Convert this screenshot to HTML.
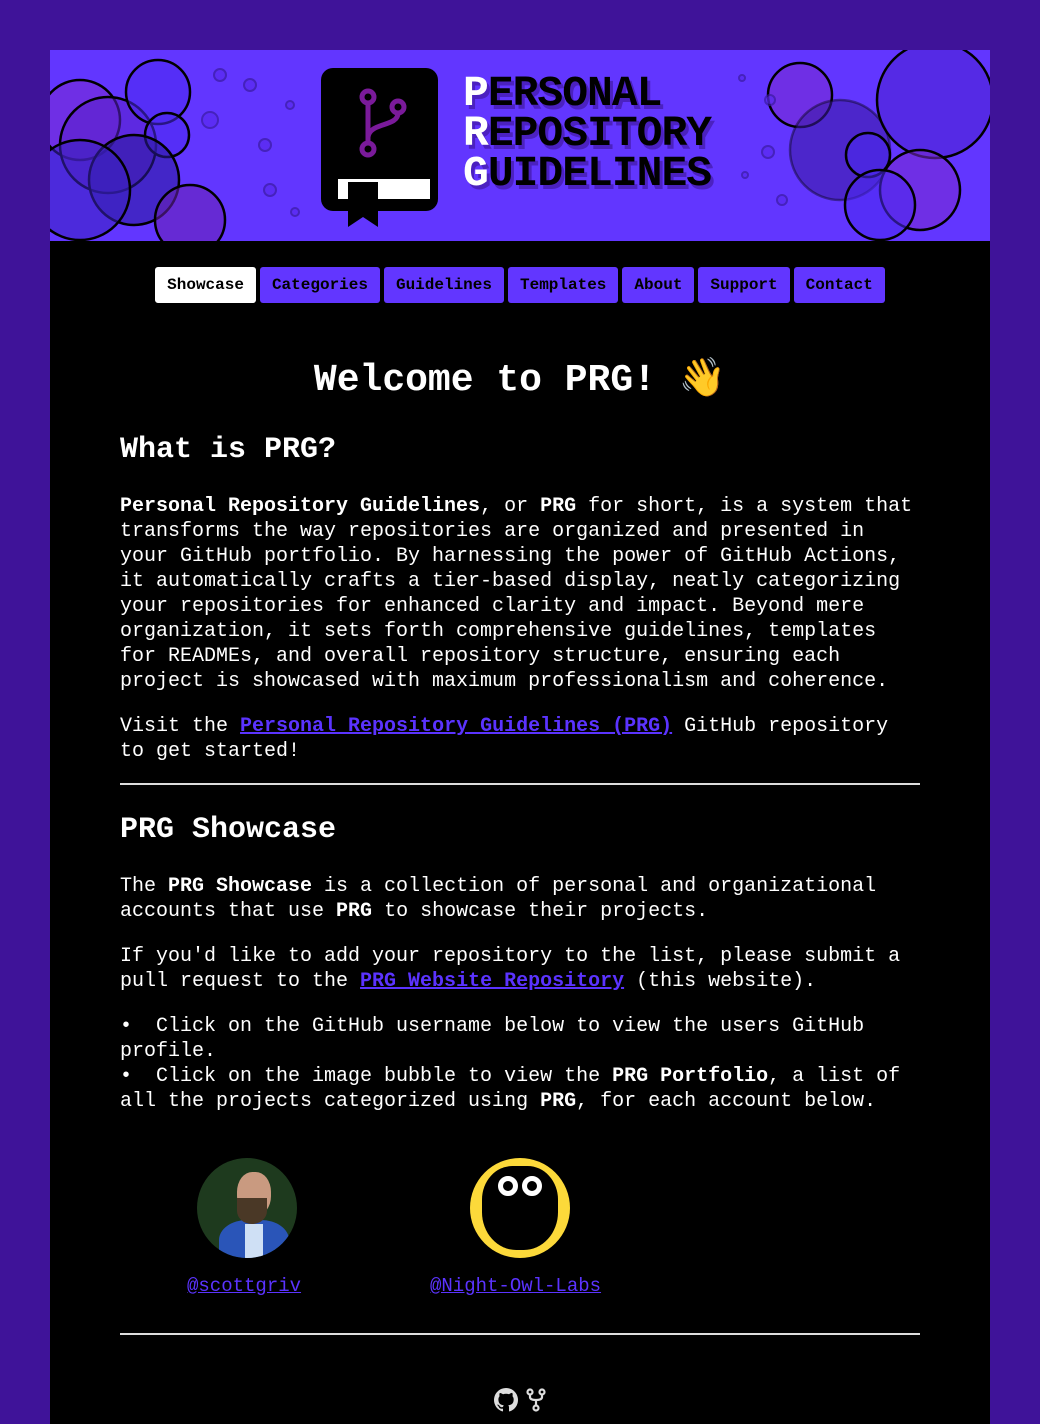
<!DOCTYPE html>
<html><head><meta charset="utf-8">
<style>
*{box-sizing:border-box}
html,body{margin:0;padding:0;width:1040px;height:1424px;overflow:hidden}
body{background:#3f1399;font-family:"Liberation Mono","DejaVu Sans Mono",monospace;color:#fff;position:relative}
.wrap{position:absolute;left:50px;top:50px;width:940px;height:1374px;background:#000;overflow:hidden}
.banner{position:absolute;left:0;top:0;width:940px;height:191px;background:#6236ff;overflow:hidden}
nav{position:absolute;top:217px;left:0;width:940px;text-align:center;font-size:0}
nav a{display:inline-block;height:36px;line-height:36px;padding:0 12px;margin:0 2px;background:#6236ff;color:#000;font-weight:bold;font-size:16px;border-radius:3px;text-decoration:none}
nav a.on{background:#fff}
.content{position:absolute;left:70px;top:300px;width:800px;font-size:20px;line-height:25px}
h1{margin:0;text-align:center;font-size:38px;line-height:56px;position:absolute;top:0;width:800px}
h2{margin:0;font-size:30px;line-height:40px;position:absolute}
p{margin:0;position:absolute;width:800px}
b{font-weight:bold}
a.l{color:#5b33ff;text-decoration:underline}
hr{position:absolute;left:0;width:800px;border:0;border-top:2px solid #ddd;margin:0}
</style></head><body>
<div class="wrap">
<div class="banner">
<svg width="940" height="191" viewBox="0 0 940 191">
<g stroke="#000" stroke-width="2.5" fill-opacity="0.55">
<circle cx="30" cy="70" r="40" fill="#7a2ad0"/>
<circle cx="58" cy="95" r="48" fill="#5a1fc8"/>
<circle cx="108" cy="42" r="32" fill="#4a28f0"/>
<circle cx="117" cy="85" r="22" fill="#4a28f0"/>
<circle cx="84" cy="130" r="45" fill="#2a1a9a"/>
<circle cx="30" cy="140" r="50" fill="#3a20c0"/>
<circle cx="140" cy="170" r="35" fill="#6a20b0"/>
<circle cx="750" cy="45" r="32" fill="#7a2ad0"/>
<circle cx="790" cy="100" r="50" fill="#3a1aa0" stroke-opacity="0.4"/>
<circle cx="885" cy="50" r="58" fill="#4a20d0"/>
<circle cx="870" cy="140" r="40" fill="#7a2ad0"/>
<circle cx="818" cy="105" r="22" fill="#4a28f0"/>
<circle cx="830" cy="155" r="35" fill="#4a28f0"/>
</g>
<g stroke="#3a1aa0" stroke-width="2" fill="#5a2af0" opacity="0.7">
<circle cx="170" cy="25" r="6"/><circle cx="160" cy="70" r="8"/><circle cx="200" cy="35" r="6"/><circle cx="215" cy="95" r="6"/><circle cx="240" cy="55" r="4"/><circle cx="220" cy="140" r="6"/><circle cx="245" cy="162" r="4"/><circle cx="720" cy="50" r="5"/><circle cx="718" cy="102" r="6"/><circle cx="732" cy="150" r="5"/><circle cx="692" cy="28" r="3"/><circle cx="695" cy="125" r="3"/>
</g>
</svg>
<svg style="position:absolute;left:270px;top:17px" width="120" height="160" viewBox="0 0 120 160">
<rect x="1" y="1" width="117" height="143" rx="12" fill="#000"/>
<rect x="18" y="112" width="92" height="20" fill="#fff"/>
<rect x="28" y="115" width="30" height="30" fill="#000"/>
<path d="M28 140 L28 160 L43 150 L58 160 L58 140Z" fill="#000"/>
<g stroke="#7a1a9a" stroke-width="5" fill="none">
<circle cx="48" cy="30" r="6"/><circle cx="78" cy="40" r="6"/><circle cx="48" cy="82" r="6"/>
<path d="M48 36 V76 M78 46 C78 60 50 55 48 70"/>
</g>
</svg>
<div style="position:absolute;left:413px;top:24px;font-weight:bold;font-size:43px;line-height:40px;color:#000;text-shadow:3px 4px 0 rgba(60,20,150,.6);letter-spacing:-1px">
<div><span style="color:#fff">P</span>ERSONAL</div><div><span style="color:#fff">R</span>EPOSITORY</div><div><span style="color:#fff">G</span>UIDELINES</div></div>
</div>
<nav><a class="on">Showcase</a><a>Categories</a><a>Guidelines</a><a>Templates</a><a>About</a><a>Support</a><a>Contact</a></nav>
<div class="content">
<h1>Welcome to PRG! <span style="font-family:'Noto Color Emoji',sans-serif">👋</span></h1>
<h2 style="top:80px">What is PRG?</h2>
<p style="top:144px"><b>Personal Repository Guidelines</b>, or <b>PRG</b> for short, is a system that transforms the way repositories are organized and presented in your GitHub portfolio. By harnessing the power of GitHub Actions, it automatically crafts a tier-based display, neatly categorizing your repositories for enhanced clarity and impact. Beyond mere organization, it sets forth comprehensive guidelines, templates for READMEs, and overall repository structure, ensuring each project is showcased with maximum professionalism and coherence.</p>
<p style="top:364px">Visit the <a class="l"><b>Personal Repository Guidelines (PRG)</b></a> GitHub repository to get started!</p>
<hr style="top:433px">
<h2 style="top:460px">PRG Showcase</h2>
<p style="top:524px">The <b>PRG Showcase</b> is a collection of personal and organizational accounts that use <b>PRG</b> to showcase their projects.</p>
<p style="top:594px">If you'd like to add your repository to the list, please submit a pull request to the <a class="l"><b>PRG Website Repository</b></a> (this website).</p>
<p style="top:664px">•&nbsp; Click on the GitHub username below to view the users GitHub profile.<br>•&nbsp; Click on the image bubble to view the <b>PRG Portfolio</b>, a list of all the projects categorized using <b>PRG</b>, for each account below.</p>
<div style="position:absolute;left:77px;top:808px;width:100px;height:100px;border-radius:50%;overflow:hidden;background:#1e3a1e">
<div style="position:absolute;left:22px;top:62px;width:70px;height:50px;border-radius:40% 40% 0 0;background:#2a55b8"></div>
<div style="position:absolute;left:48px;top:66px;width:18px;height:40px;background:#cfe0f5"></div>
<div style="position:absolute;left:40px;top:14px;width:34px;height:44px;border-radius:45%;background:#c99a80"></div>
<div style="position:absolute;left:40px;top:40px;width:30px;height:26px;border-radius:0 0 50% 50%;background:#4a3826"></div>
</div>
<div style="position:absolute;left:350px;top:808px;width:100px;height:100px;border-radius:50%;background:#fcd93a;overflow:hidden">
<div style="position:absolute;left:12px;top:8px;width:76px;height:84px;border-radius:40% 40% 45% 45%;background:#000"></div>
<div style="position:absolute;left:28px;top:18px;width:20px;height:20px;border-radius:50%;border:5px solid #fff"></div>
<div style="position:absolute;left:52px;top:18px;width:20px;height:20px;border-radius:50%;border:5px solid #fff"></div>
</div>
<a class="l" style="position:absolute;left:67px;top:974px;font-size:19px;top:924px">@scottgriv</a>
<a class="l" style="position:absolute;left:310px;top:924px;font-size:19px">@Night-Owl-Labs</a>
<hr style="top:983px">
<svg style="position:absolute;left:374px;top:1038px" width="24" height="24" viewBox="0 0 16 16"><path fill="#ddd" d="M8 0C3.580 0 0 3.580 0 8c0 3.54 2.29 6.53 5.47 7.59.4.07.55-.17.55-.38 0-.19-.01-.82-.01-1.49-2.01.37-2.53-.49-2.690-.94-.09-.23-.48-.94-.82-1.13-.28-.15-.68-.52-.01-.53.63-.01 1.08.58 1.23.82.72 1.21 1.87.87 2.33.66.07-.52.28-.87.51-1.07-1.78-.2-3.64-.89-3.64-3.95 0-.87.31-1.59.82-2.15-.08-.2-.36-1.02.08-2.12 0 0 .67-.21 2.2.82.64-.18 1.32-.27 2-.27s1.36.09 2 .27c1.53-1.04 2.2-.82 2.2-.82.44 1.1.16 1.92.08 2.12.51.56.82 1.27.82 2.15 0 3.07-1.87 3.75-3.65 3.95.29.25.54.73.54 1.48 0 1.07-.01 1.93-.01 2.2 0 .21.15.46.55.38A8.01 8.01 0 0016 8c0-4.42-3.58-8-8-8z"/></svg>
<svg style="position:absolute;left:406px;top:1038px" width="20" height="24" viewBox="0 0 20 24"><g fill="none" stroke="#ddd" stroke-width="2.2"><circle cx="4" cy="4" r="2.5"/><circle cx="16" cy="4" r="2.5"/><circle cx="10" cy="20" r="2.5"/><path d="M4 6.5V9q0 3 6 3t6-3V6.5M10 12v5.5"/></g></svg>
</div>
</div>
</body></html>
